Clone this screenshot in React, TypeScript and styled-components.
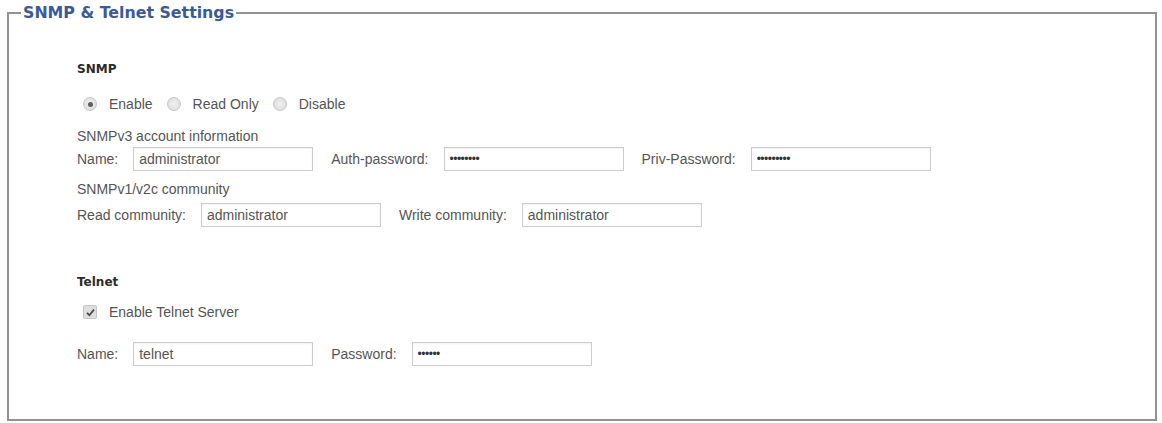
import React from 'react';
import styled, { createGlobalStyle } from 'styled-components';

const GlobalStyle = createGlobalStyle`
  html, body {
    margin: 0;
    padding: 0;
    background: #fff;
  }
  body {
    font-family: "Liberation Sans", Arial, sans-serif;
    color: #555;
  }
`;

const Page = styled.div`
  padding: 3px 5px 0 7px;
`;

const Frame = styled.fieldset`
  margin: 0;
  padding: 0;
  min-width: 0;
  border: 2px solid #929292;
`;

const Legend = styled.legend`
  margin-left: 12px;
  padding: 0 2px;
  font-family: "DejaVu Sans", Verdana, sans-serif;
  font-weight: bold;
  font-size: 15.8px;
  line-height: 20px;
  color: #3a5a9b;
`;

const Body = styled.div`
  padding: 0 0 53px 68px;
`;

const SectionTitle = styled.div<{ $top: number }>`
  margin-top: ${p => p.$top}px;
  font-family: "DejaVu Sans", Verdana, sans-serif;
  font-weight: bold;
  font-size: 12px;
  line-height: 16px;
  color: #2b2b2b;
`;

const GroupLabel = styled.div<{ $top: number }>`
  margin-top: ${p => p.$top}px;
  font-size: 14px;
  line-height: 16px;
  color: #555;
`;

const Row = styled.div<{ $top: number }>`
  display: flex;
  align-items: center;
  height: 24px;
  margin-top: ${p => p.$top}px;
  font-size: 14px;
  color: #555;
`;

const OptionRow = styled(Row)`
  height: 20px;
  padding-left: 6px;
`;

const Option = styled.label`
  display: flex;
  align-items: center;
  margin-right: 14px;
  gap: 12px;
`;

const Radio = styled.input.attrs({ type: 'radio' })`
  appearance: none;
  margin: 0;
  width: 14px;
  height: 14px;
  border-radius: 50%;
  border: 1px solid #c6c6c6;
  background: radial-gradient(circle, #f0f0f0 0%, #dadada 100%);
  display: grid;
  place-items: center;

  &:checked::after {
    content: '';
    width: 5px;
    height: 5px;
    border-radius: 50%;
    background: #5e5e5e;
  }
`;

const CheckBox = styled.span`
  display: inline-flex;
  align-items: center;
  justify-content: center;
  width: 12px;
  height: 12px;
  border: 1px solid #c6c6c6;
  border-radius: 2px;
  background: #dedede;
`;

const FieldLabel = styled.span`
  margin-right: 15px;
  white-space: nowrap;
`;

const TextBox = styled.input`
  box-sizing: border-box;
  width: 180px;
  height: 24px;
  margin: 0 18px 0 0;
  padding: 0 5px;
  border: 1px solid #cdcdcd;
  box-shadow: inset 0 1px 2px rgba(0, 0, 0, 0.06);
  background: #fff;
  font-family: "Liberation Sans", Arial, sans-serif;
  font-size: 14px;
  color: #555;
  outline: none;
`;

const PasswordBox = styled(TextBox).attrs({ type: 'password' })`
  font-size: 12px;
  letter-spacing: -0.5px;
  color: #333;
`;

type FieldProps = { label: string; value: string; secret?: boolean };

function Field({ label, value, secret }: FieldProps) {
  return (
    <>
      <FieldLabel>{label}</FieldLabel>
      {secret ? <PasswordBox defaultValue={value} readOnly /> : <TextBox defaultValue={value} readOnly />}
    </>
  );
}

export default function App() {
  return (
    <Page>
      <GlobalStyle />
      <Frame>
        <Legend>SNMP &amp; Telnet Settings</Legend>
        <Body>
          <SectionTitle $top={38}>SNMP</SectionTitle>
          <OptionRow $top={17}>
            <Option><Radio name="snmp" defaultChecked />Enable</Option>
            <Option><Radio name="snmp" />Read Only</Option>
            <Option><Radio name="snmp" />Disable</Option>
          </OptionRow>

          <GroupLabel $top={14}>SNMPv3 account information</GroupLabel>
          <Row $top={3}>
            <Field label="Name:" value="administrator" />
            <Field label="Auth-password:" value="secret88" secret />
            <Field label="Priv-Password:" value="secret999" secret />
          </Row>

          <GroupLabel $top={10}>SNMPv1/v2c community</GroupLabel>
          <Row $top={6}>
            <Field label="Read community:" value="administrator" />
            <Field label="Write community:" value="administrator" />
          </Row>

          <SectionTitle $top={47}>Telnet</SectionTitle>
          <OptionRow $top={12}>
            <Option>
              <CheckBox>
                <svg width="9" height="9" viewBox="0 0 9 9">
                  <path d="M1 4.8 L3.4 7.2 L8 1.6" fill="none" stroke="#4a4a4a" strokeWidth="1.8" />
                </svg>
              </CheckBox>
              Enable Telnet Server
            </Option>
          </OptionRow>
          <Row $top={20}>
            <Field label="Name:" value="telnet" />
            <Field label="Password:" value="telnet" secret />
          </Row>
        </Body>
      </Frame>
    </Page>
  );
}
